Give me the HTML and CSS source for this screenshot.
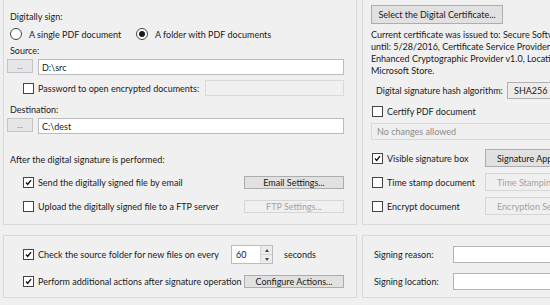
FILE: index.html
```html
<!DOCTYPE html>
<html lang="en">
<head>
    <meta charset="UTF-8">
    <title>Digital Signature Options</title>
    <link rel="stylesheet" href="styles.css">
</head>
<body>
<div class="window">
    <div class="groups top-groups">
        <div class="group left">
            <div class="label lbl-sign">Digitally sign:</div>
            <div class="radio-row">
                <span class="radio-item first"><span class="radio"></span>A single PDF document</span>
                <span class="radio-item"><span class="radio on"></span>A folder with PDF documents</span>
            </div>
            <div class="label lbl-small">Source:</div>
            <div class="path-row">
                <span class="btn browse">...</span>
                <span class="input path">D:\src</span>
            </div>
            <div class="check-row pw-row">
                <span class="check"></span>Password to open encrypted documents:
                <span class="input disabled pw"></span>
            </div>
            <div class="label lbl-dest">Destination:</div>
            <div class="path-row">
                <span class="btn browse">...</span>
                <span class="input path">C:\dest</span>
            </div>
            <div class="label lbl-after">After the digital signature is performed:</div>
            <div class="check-row opt-row first-opt">
                <span class="check on"><svg viewBox="0 0 11 11"><polyline points="2.5,5.5 4.5,7.8 8.6,2.6"/></svg></span>Send the digitally signed file by email
                <span class="btn side">Email Settings...</span>
            </div>
            <div class="check-row opt-row">
                <span class="check"></span>Upload the digitally signed file to a FTP server
                <span class="btn side disabled">FTP Settings...</span>
            </div>
        </div>
        <div class="group right">
            <span class="btn cert-btn">Select the Digital Certificate...</span>
            <div class="cert-text">
                Current certificate was issued to: Secure Software Inc., valid<br>
                until: 5/28/2016, Certificate Service Provider: Microsoft<br>
                Enhanced Cryptographic Provider v1.0, Location: Local<br>
                Microsoft Store.
            </div>
            <div class="hash-row">
                <span class="hash-label">Digital signature hash algorithm:</span>
                <span class="combo">SHA256</span>
            </div>
            <div class="check-row r-row certify">
                <span class="check"></span>Certify PDF document
            </div>
            <div class="combo disabled wide">No changes allowed</div>
            <div class="check-row r-row btn-row visible">
                <span class="r-item"><span class="check on"><svg viewBox="0 0 11 11"><polyline points="2.5,5.5 4.5,7.8 8.6,2.6"/></svg></span>Visible signature box</span>
                <span class="btn r-btn">Signature Appearance...</span>
            </div>
            <div class="check-row r-row btn-row">
                <span class="r-item"><span class="check"></span>Time stamp document</span>
                <span class="btn r-btn disabled">Time Stamping...</span>
            </div>
            <div class="check-row r-row btn-row">
                <span class="r-item"><span class="check"></span>Encrypt document</span>
                <span class="btn r-btn disabled">Encryption Settings...</span>
            </div>
        </div>
    </div>

    <div class="groups bottom-groups">
        <div class="group left">
            <div class="check-row watch-row">
                <span class="watch-label"><span class="check on"><svg viewBox="0 0 11 11"><polyline points="2.5,5.5 4.5,7.8 8.6,2.6"/></svg></span>Check the source folder for new files on every</span>
                <span class="spinner">
                    <span class="spin-value">60</span>
                    <span class="spin-btns">
                        <span class="spin-up"></span>
                        <span class="spin-down"></span>
                    </span>
                </span>
                <span class="seconds">seconds</span>
            </div>
            <div class="check-row opt-row perform-row">
                <span class="check on"><svg viewBox="0 0 11 11"><polyline points="2.5,5.5 4.5,7.8 8.6,2.6"/></svg></span>Perform additional actions after signature operation
                <span class="btn side">Configure Actions...</span>
            </div>
        </div>
        <div class="group right">
            <div class="field-row first-field">
                <span class="field-label">Signing reason:</span>
                <span class="input field"></span>
            </div>
            <div class="field-row">
                <span class="field-label">Signing location:</span>
                <span class="input field"></span>
            </div>
        </div>
    </div>
</div>
</body>
</html>
```

FILE: styles.css
```css
body {
    margin: 0;
    width: 550px;
    height: 305px;
    overflow: hidden;
    background: #f0f0f0;
    font-family: Lato, "Liberation Sans", sans-serif;
    font-size: 9px;
    color: #1a1a1a;
}
.window {
    width: 660px;
    padding-left: 3px;
}
.groups {
    display: flex;
    gap: 5px;
}
.group {
    box-sizing: border-box;
    border: 1px solid #d9d9d9;
}
.group.left {
    width: 354px;
    padding: 0 12px 0 3px;
}
.group.right {
    width: 280px;
    padding-left: 8px;
}
.top-groups .group {
    height: 225px;
    border-top: none;
}
.bottom-groups {
    margin-top: 10px;
}
.bottom-groups .group {
    height: 63px;
}

/* labels */
.label {
    height: 12px;
    line-height: 12px;
    padding-left: 3px;
    white-space: nowrap;
}
.lbl-sign { margin-top: 11px; }
.lbl-small { margin-top: 4px; }
.lbl-dest { margin-top: 8px; }
.lbl-after { margin-top: 20px; }

/* radios */
.radio-row {
    margin-top: 4px;
    height: 14px;
    display: flex;
    align-items: center;
    padding-left: 3px;
}
.radio-item {
    display: flex;
    align-items: center;
    white-space: nowrap;
}
.radio-item.first {
    width: 126px;
}
.radio {
    box-sizing: border-box;
    width: 12px;
    height: 12px;
    border: 1px solid #444;
    border-radius: 50%;
    background: #fff;
    margin-right: 7px;
    display: flex;
    align-items: center;
    justify-content: center;
}
.radio.on::after {
    content: "";
    width: 6px;
    height: 6px;
    border-radius: 50%;
    background: #1a1a1a;
}

/* checkboxes */
.check {
    box-sizing: border-box;
    width: 11px;
    height: 11px;
    border: 1px solid #444;
    background: #fff;
    margin-right: 4px;
    flex-shrink: 0;
}
.check svg {
    display: block;
    width: 9px;
    height: 9px;
    margin: 0;
}
.check svg polyline {
    fill: none;
    stroke: #111;
    stroke-width: 1.7;
}
.check-row {
    display: flex;
    align-items: center;
    white-space: nowrap;
}
.pw-row {
    margin-top: 5px;
    height: 16px;
    padding-left: 16px;
}
.opt-row {
    height: 18px;
    padding-left: 16px;
}
.first-opt { margin-top: 7px; }
.opt-row + .opt-row { margin-top: 6px; }

/* buttons */
.btn {
    box-sizing: border-box;
    display: flex;
    align-items: center;
    justify-content: center;
    background: #e1e1e1;
    border: 1px solid #adadad;
    white-space: nowrap;
    overflow: hidden;
}
.btn.disabled {
    background: #f0f0f0;
    border-color: #d6d6d6;
    color: #a3a3a3;
}
.browse {
    width: 26px;
    height: 14px;
    color: #777;
    font-size: 8px;
    background: #e6e6e6;
    border-color: #c4c4c4;
}
.side {
    width: 100px;
    margin-left: auto;
}

/* inputs */
.input {
    box-sizing: border-box;
    display: flex;
    align-items: center;
    background: #fff;
    border: 1px solid #bcbcbc;
    padding-left: 3px;
    white-space: nowrap;
}
.input.disabled {
    background: #f0f0f0;
    border-color: #dadada;
}
.path-row {
    margin-top: 2px;
    height: 16px;
    display: flex;
    align-items: flex-start;
}
.path {
    margin-left: 5px;
    width: 306px;
    height: 16px;
}
.pw {
    margin-left: auto;
    width: 139px;
    height: 16px;
}

/* right top */
.cert-btn {
    margin-top: 5px;
    width: 132px;
    height: 19px;
}
.cert-text {
    margin-top: 5px;
    line-height: 12px;
    white-space: nowrap;
}
.hash-row {
    margin-top: 5px;
    height: 17px;
    display: flex;
    align-items: center;
    white-space: nowrap;
}
.hash-label {
    box-sizing: border-box;
    width: 136px;
    padding-left: 5px;
}
.combo {
    box-sizing: border-box;
    display: flex;
    align-items: center;
    height: 17px;
    width: 90px;
    padding-left: 6px;
    background: #ececec;
    border: 1px solid #b0b0b0;
}
.combo.disabled {
    background: #efefef;
    border-color: #d9d9d9;
    color: #8c8c8c;
    padding-left: 5px;
}
.combo.wide {
    margin-top: 5px;
    width: 240px;
}
.r-row {
    padding-left: 1px;
}
.certify {
    margin-top: 5px;
    height: 14px;
}
.btn-row {
    height: 18px;
    margin-top: 7px;
}
.btn-row.visible {
    margin-top: 9px;
}
.btn-row + .btn-row {
    margin-top: 6px;
}
.r-item {
    display: flex;
    align-items: center;
    width: 113px;
}
.r-btn {
    width: 100px;
    height: 18px;
    justify-content: flex-start;
    padding-left: 11px;
}

/* bottom left */
.bottom-groups .group.left {
    padding-top: 9px;
}
.watch-row {
    height: 19px;
    padding-left: 16px;
}
.watch-label {
    display: flex;
    align-items: center;
    width: 208px;
}
.spinner {
    box-sizing: border-box;
    width: 42px;
    height: 19px;
    display: flex;
    background: #fff;
    border: 1px solid #bcbcbc;
}
.spin-value {
    flex: 1;
    display: flex;
    align-items: center;
    padding-left: 4px;
}
.spin-btns {
    width: 11px;
    display: flex;
    flex-direction: column;
    border-left: 1px solid #d4d4d4;
    background: #ececec;
}
.spin-up,
.spin-down {
    flex: 1;
    display: flex;
    align-items: center;
    justify-content: center;
}
.spin-up { border-bottom: 1px solid #d4d4d4; }
.spin-up::after {
    content: "";
    border-left: 2.5px solid transparent;
    border-right: 2.5px solid transparent;
    border-bottom: 3px solid #444;
}
.spin-down::after {
    content: "";
    border-left: 2.5px solid transparent;
    border-right: 2.5px solid transparent;
    border-top: 3px solid #444;
}
.seconds {
    margin-left: 11px;
}
.perform-row {
    margin-top: 8px;
}

/* bottom right */
.bottom-groups .group.right {
    padding-top: 10px;
}
.field-row {
    display: flex;
    align-items: center;
    height: 17px;
    white-space: nowrap;
}
.field-row + .field-row {
    margin-top: 10px;
}
.field-label {
    box-sizing: border-box;
    width: 82px;
    padding-left: 3px;
}
.field {
    width: 170px;
    height: 17px;
    border-color: #b4b4b4;
}
```
